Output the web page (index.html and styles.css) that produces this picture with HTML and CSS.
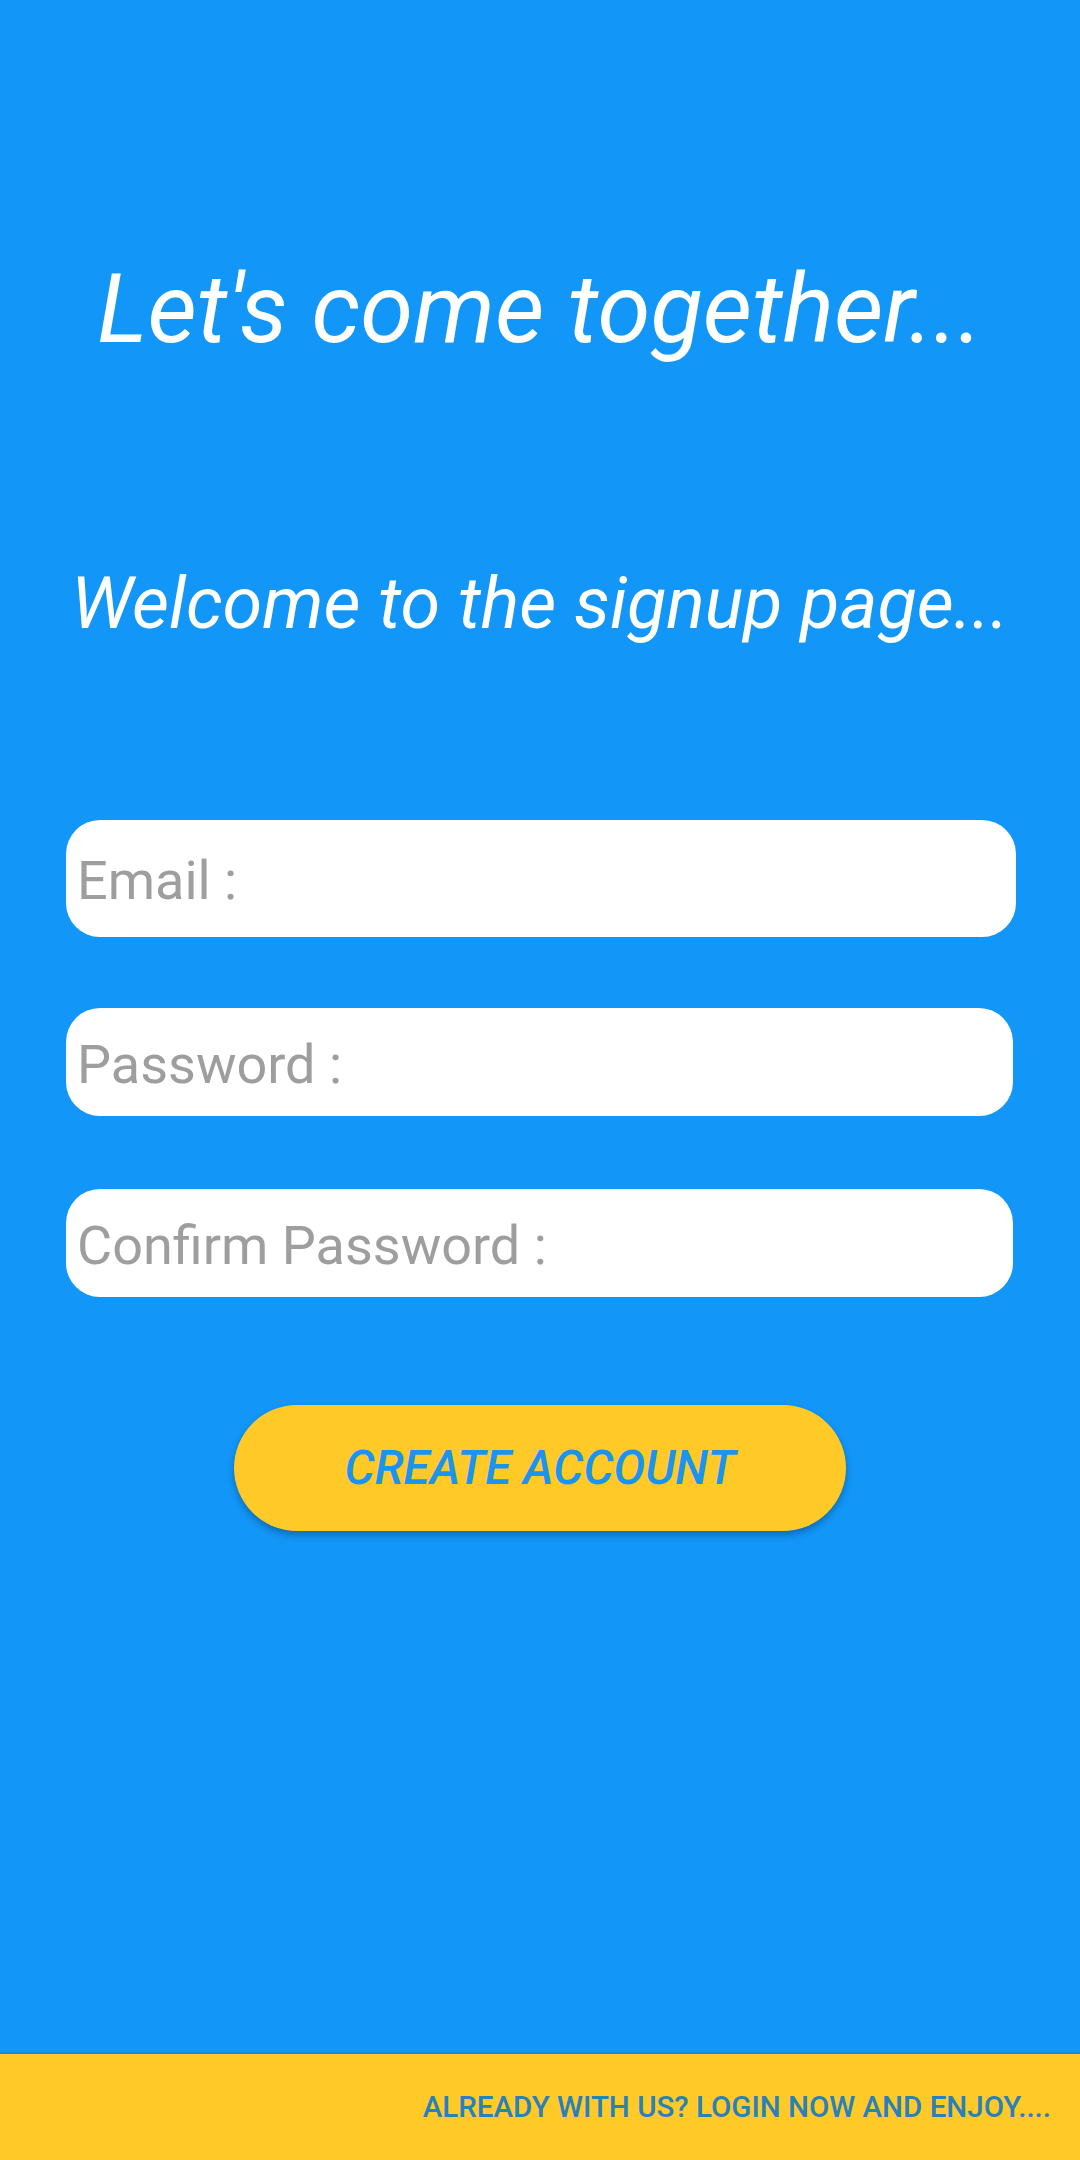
FILE: index.html
```html
<!DOCTYPE html>
<html>
<head>
<meta charset="utf-8">
<link rel="stylesheet" href="styles.css">
</head>
<body>
<div class="screen">
  <h1 class="title">Let's come together...</h1>
  <h2 class="subtitle">Welcome to the signup page...</h2>
  <form class="form">
    <input class="field field-email" type="text" placeholder="Email :">
    <input class="field field-pass" type="password" placeholder="Password :">
    <input class="field field-confirm" type="password" placeholder="Confirm Password :">
    <button class="create" type="button">CREATE ACCOUNT</button>
  </form>
  <div class="footer">ALREADY WITH US? LOGIN NOW AND ENJOY....</div>
</div>
</body>
</html>
```
FILE: styles.css
```css
* { box-sizing: border-box; }
html, body {
  margin: 0;
  padding: 0;
  background: #1296F8;
  font-family: Roboto, "Liberation Sans", sans-serif;
}
.screen {
  width: 1080px;
  height: 2160px;
  display: flex;
  flex-direction: column;
  align-items: center;
  overflow: hidden;
}
.title {
  margin: 252px 0 0;
  font-size: 96px;
  line-height: 115px;
  font-weight: 400;
  font-style: italic;
  color: #fff;
}
.subtitle {
  margin: 194px 0 0;
  font-size: 72px;
  line-height: 86px;
  font-weight: 400;
  font-style: italic;
  color: #fff;
}
.form {
  display: flex;
  flex-direction: column;
  align-items: flex-start;
  width: 1080px;
  padding-left: 66px;
}
.field {
  display: block;
  border: none;
  outline: none;
  background: #fff;
  border-radius: 34px;
  padding: 4px 12px 0 11px;
  font-family: Roboto, "Liberation Sans", sans-serif;
  font-size: 54px;
  color: #333;
}
.field::placeholder { color: #9E9E9E; }
.field-email { margin-top: 173px; width: 950px; height: 117px; }
.field-pass { margin-top: 71px; width: 947px; height: 108px; }
.field-confirm { margin-top: 73px; width: 947px; height: 108px; }
.create {
  align-self: center;
  margin: 108px 0 0 -66px;
  width: 612px;
  height: 126px;
  border: none;
  border-radius: 63px;
  background: #FFCA28;
  color: #1A94F0;
  font-family: Roboto, "Liberation Sans", sans-serif;
  font-size: 47.5px;
  font-weight: 500;
  font-style: italic;
  box-shadow: 0 4px 7px rgba(0,0,0,0.28);
}
.footer {
  margin-top: auto;
  width: 1080px;
  height: 106px;
  background: #FFCA28;
  display: flex;
  align-items: center;
  justify-content: flex-end;
  padding-right: 29px;
  color: #2A80B8;
  font-size: 29.5px;
  font-weight: 500;
  box-shadow: 0 -1px 2px rgba(0,0,0,0.15);
}
```
